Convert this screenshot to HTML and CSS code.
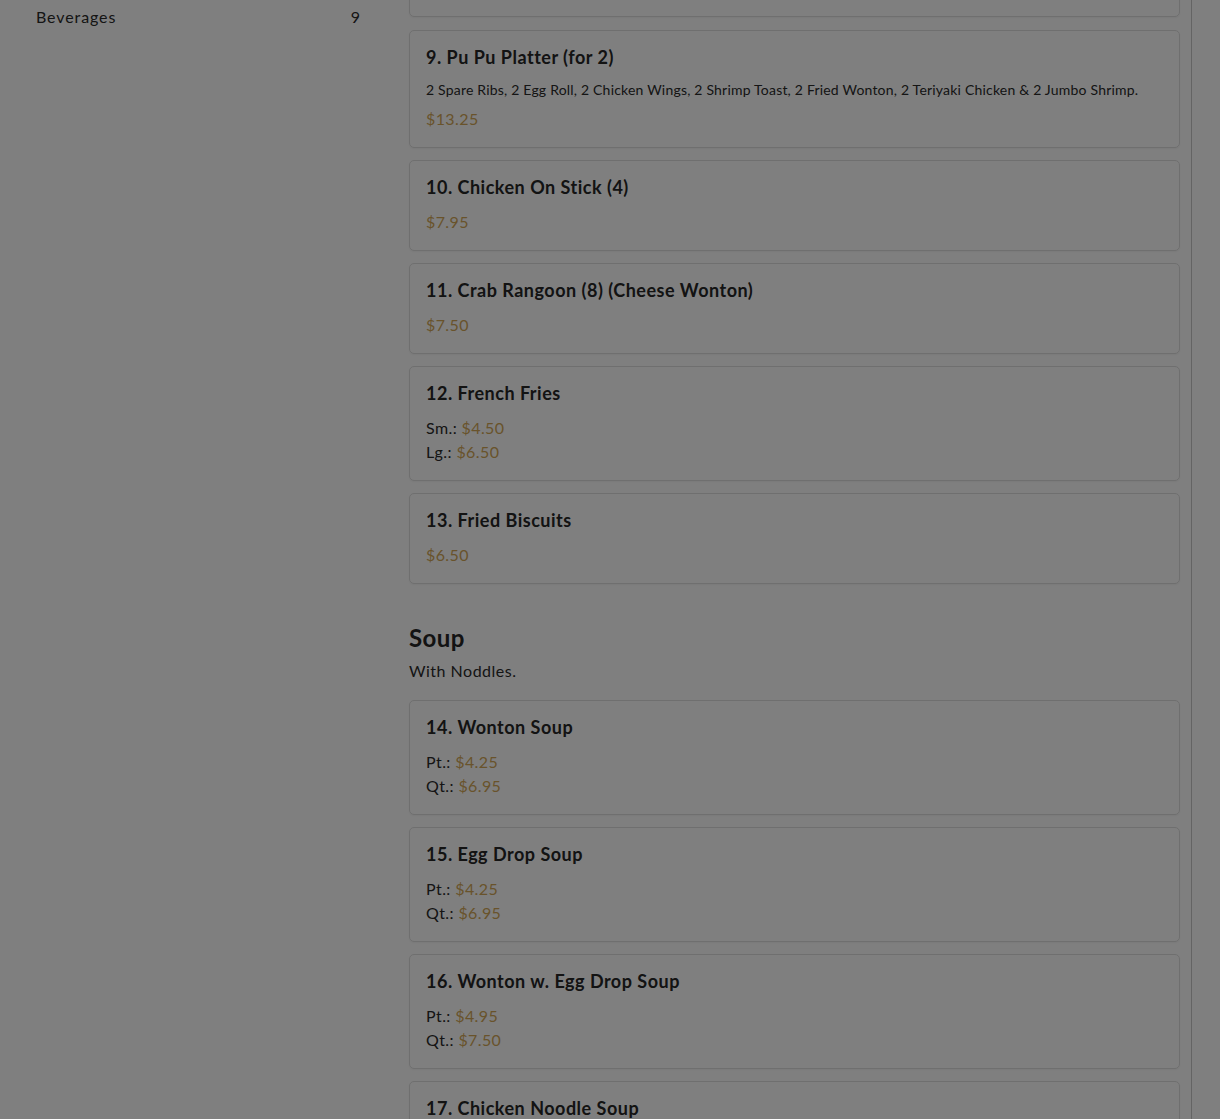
FILE: index.html
```html
<!DOCTYPE html>
<html>
<head>
<meta charset="utf-8">
<link rel="stylesheet" href="styles.css">
</head>
<body>
<div class="page">
  <aside class="sidebar">
    <ul class="cat-list">
      <li class="cat"><span>Beverages</span><span class="count">9</span></li>
    </ul>
  </aside>
  <main class="menu">
    <div class="card card-cut">
      <div class="prices"><div class="price-row"><span class="price">$6.95</span></div></div>
    </div>
    <div class="card">
      <h3 class="item-title">9. Pu Pu Platter (for 2)</h3>
      <p class="item-desc">2 Spare Ribs, 2 Egg Roll, 2 Chicken Wings, 2 Shrimp Toast, 2 Fried Wonton, 2 Teriyaki Chicken &amp; 2 Jumbo Shrimp.</p>
      <div class="prices"><div class="price-row"><span class="price">$13.25</span></div></div>
    </div>
    <div class="card">
      <h3 class="item-title">10. Chicken On Stick (4)</h3>
      <div class="prices"><div class="price-row"><span class="price">$7.95</span></div></div>
    </div>
    <div class="card">
      <h3 class="item-title">11. Crab Rangoon (8) (Cheese Wonton)</h3>
      <div class="prices"><div class="price-row"><span class="price">$7.50</span></div></div>
    </div>
    <div class="card">
      <h3 class="item-title">12. French Fries</h3>
      <div class="prices">
        <div class="price-row">Sm.: <span class="price">$4.50</span></div>
        <div class="price-row">Lg.: <span class="price">$6.50</span></div>
      </div>
    </div>
    <div class="card">
      <h3 class="item-title">13. Fried Biscuits</h3>
      <div class="prices"><div class="price-row"><span class="price">$6.50</span></div></div>
    </div>

    <section class="section">
      <h2 class="section-title">Soup</h2>
      <p class="section-desc">With Noddles.</p>
    </section>
    <div class="card">
      <h3 class="item-title">14. Wonton Soup</h3>
      <div class="prices">
        <div class="price-row">Pt.: <span class="price">$4.25</span></div>
        <div class="price-row">Qt.: <span class="price">$6.95</span></div>
      </div>
    </div>
    <div class="card">
      <h3 class="item-title">15. Egg Drop Soup</h3>
      <div class="prices">
        <div class="price-row">Pt.: <span class="price">$4.25</span></div>
        <div class="price-row">Qt.: <span class="price">$6.95</span></div>
      </div>
    </div>
    <div class="card">
      <h3 class="item-title">16. Wonton w. Egg Drop Soup</h3>
      <div class="prices">
        <div class="price-row">Pt.: <span class="price">$4.95</span></div>
        <div class="price-row">Qt.: <span class="price">$7.50</span></div>
      </div>
    </div>
    <div class="card">
      <h3 class="item-title">17. Chicken Noodle Soup</h3>
      <div class="prices">
        <div class="price-row">Pt.: <span class="price">$4.95</span></div>
        <div class="price-row">Qt.: <span class="price">$7.50</span></div>
      </div>
    </div>
  </main>
  <aside class="cart"></aside>
</div>
<div class="backdrop"></div>
</body>
</html>
```
FILE: styles.css
```css
html, body {
  margin: 0;
  padding: 0;
  height: 100%;
  overflow: hidden;
}
body {
  font-family: Lato, "Open Sans", sans-serif;
  color: #2a2a2a;
  background: #ffffff;
}
.page {
  display: flex;
  align-items: flex-start;
}
.sidebar {
  width: 377px;
  flex: none;
  padding: 5px 0 0 20px;
  box-sizing: border-box;
}
.cat-list {
  list-style: none;
  margin: 0;
  padding: 0;
}
.cat {
  display: flex;
  justify-content: space-between;
  padding: 0 16px;
  font-size: 16px;
  line-height: 24px;
  letter-spacing: 0.9px;
}
.menu {
  width: 771px;
  flex: none;
  margin-left: 32px;
  margin-top: -84px;
}
.card {
  border: 1px solid #dedede;
  border-radius: 5px;
  padding: 15px 16px 16px;
  margin-bottom: 12.5px;
  box-shadow: 0 1px 2px rgba(0,0,0,0.05);
}
.card-cut {
  padding-top: 59px;
}
.item-title {
  margin: 0 0 11.5px;
  font-size: 18px;
  line-height: 22px;
  font-weight: 700;
  color: #262626;
  letter-spacing: 0.5px;
}
.item-desc {
  margin: 0 0 6.5px;
  font-size: 14px;
  line-height: 21px;
  letter-spacing: 0.2px;
}
.prices {
  font-size: 16px;
  line-height: 24px;
  letter-spacing: 0.4px;
}
.price {
  color: #d2a757;
}
.section {
  padding-top: 27px;
  margin-bottom: 17px;
}
.section-title {
  margin: 0 0 7px;
  font-size: 24px;
  line-height: 29px;
  font-weight: 700;
  color: #262626;
  letter-spacing: 0.4px;
}
.section-desc {
  margin: 0;
  font-size: 16px;
  line-height: 24px;
  letter-spacing: 0.5px;
}
.cart {
  flex: 1;
  margin-left: 11px;
  border-left: 1px solid #c8c8c8;
  height: 1119px;
}
.backdrop {
  position: fixed;
  inset: 0;
  background: rgba(0,0,0,0.5);
}
```
